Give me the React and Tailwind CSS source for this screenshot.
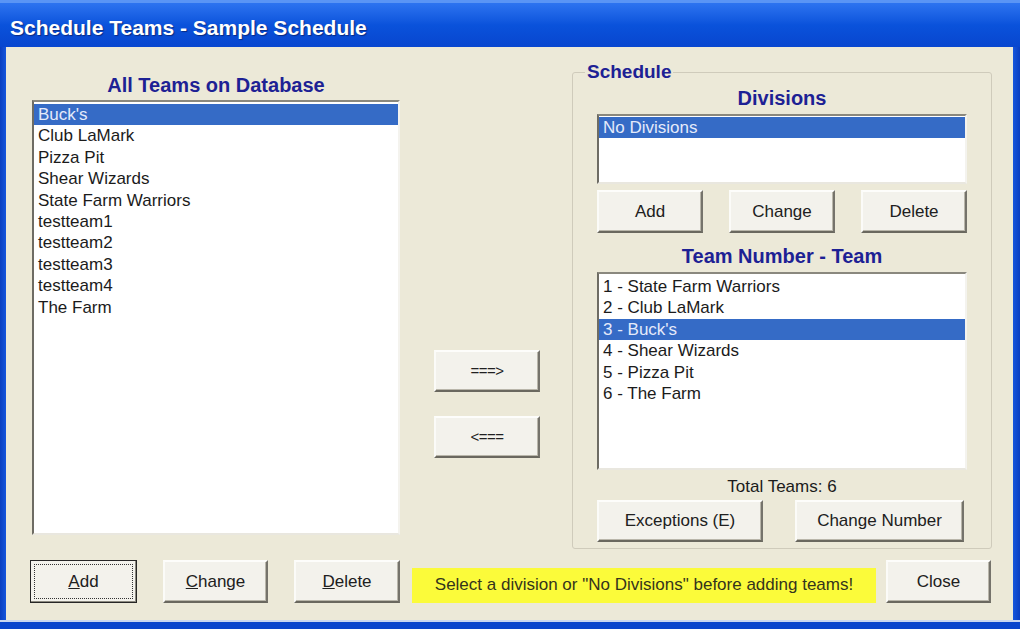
import React from "react";

const ALL_TEAMS = [
  "Buck's",
  "Club LaMark",
  "Pizza Pit",
  "Shear Wizards",
  "State Farm Warriors",
  "testteam1",
  "testteam2",
  "testteam3",
  "testteam4",
  "The Farm",
];

const SCHEDULED = [
  "1 - State Farm Warriors",
  "2 - Club LaMark",
  "3 - Buck's",
  "4 - Shear Wizards",
  "5 - Pizza Pit",
  "6 - The Farm",
];

function ListBox({ items, selected, className }) {
  return (
    <div
      className={
        "bg-white border-2 border-t-[#8a887e] border-l-[#6e6c64] border-r-[#f4f3ee] border-b-[#e9e7df] overflow-hidden " +
        className
      }
    >
      {items.map((it, i) => (
        <div
          key={it}
          className={
            i === selected
              ? "h-[21.4px] leading-[21.4px] pl-[4px] bg-[#356bc6] text-[#e4eafa] whitespace-nowrap"
              : "h-[21.4px] leading-[21.4px] pl-[4px] text-[#1b1b1b] whitespace-nowrap"
          }
        >
          {it}
        </div>
      ))}
    </div>
  );
}

function Btn({ className, children, focused }) {
  if (focused) {
    return (
      <div
        className={
          "border border-[#262626] bg-[#f3f2ec] p-[3px] shadow-[inset_-1px_-1px_0_#8c8a80] " +
          className
        }
      >
        <div className="h-full border border-dotted border-[#333] flex items-center justify-center text-[#202020]">
          {children}
        </div>
      </div>
    );
  }
  return (
    <div
      className={
        "flex items-center justify-center bg-[#f3f2ec] text-[#202020] border-2 border-t-[#fdfdfb] border-l-[#fbfbf8] border-r-[#75736b] border-b-[#6a685f] shadow-[inset_-1px_-1px_0_#b9b6aa] " +
        className
      }
    >
      {children}
    </div>
  );
}

function Heading({ children, className }) {
  return (
    <div
      className={
        "h-[20px] leading-[20px] text-center font-bold text-[20px] text-[#1d2194] " +
        className
      }
    >
      {children}
    </div>
  );
}

export default function App() {
  return (
    <div
      className="w-[1020px] h-[629px] flex flex-col bg-[#0b47d0] text-[17px] overflow-hidden"
      style={{ fontFamily: '"Liberation Sans", Arial, sans-serif' }}
    >
      {/* title bar */}
      <div className="h-[47px] flex items-center pl-[10px] pt-[6px] bg-gradient-to-b from-[#2d74f0] via-[#0a52db] to-[#0846cf] border-t-[3px] border-[#5a95f5]">
        <span className="text-white font-bold text-[21px] [text-shadow:1px_1px_1px_#0a2a80]">
          Schedule Teams - Sample Schedule
        </span>
      </div>

      <div className="flex flex-1 min-h-0">
        <div className="w-[6px] bg-gradient-to-r from-[#0a3ebf] to-[#1656dd]" />

        {/* dialog body */}
        <div className="flex-1 bg-[#ece9d8] flex flex-col pt-[13px]">
          <div className="flex items-start">
            {/* left: all teams */}
            <div className="ml-[26px] w-[368px] flex flex-col">
              <Heading className="mt-[15px]">All Teams on Database</Heading>
              <ListBox
                items={ALL_TEAMS}
                selected={0}
                className="mt-[5px] h-[435px] pt-[2px]"
              />
            </div>

            {/* middle arrows */}
            <div className="ml-[34px] w-[106px] flex flex-col gap-[24px] mt-[290px]">
              <Btn className="h-[42px] w-[106px] text-[15px] tracking-[-0.5px]">===&gt;</Btn>
              <Btn className="h-[42px] w-[106px] text-[15px] tracking-[-0.5px]">&lt;===</Btn>
            </div>

            {/* schedule groupbox */}
            <fieldset className="ml-[32px] mt-[1px] w-[420px] border border-[#cfcbbb] rounded-[3px] px-0 pb-[6px]">
              <legend className="ml-[12px] px-[2px] h-[22px] leading-[22px] font-bold text-[19px] text-[#1d2194]">
                Schedule
              </legend>
              <div className="px-[24px]">
                <Heading className="mt-[5px]">Divisions</Heading>
                <ListBox
                  items={["No Divisions"]}
                  selected={0}
                  className="mt-[6px] h-[70px] pt-px"
                />
                <div className="mt-[6px] flex justify-between">
                  <Btn className="w-[106px] h-[43px]">Add</Btn>
                  <Btn className="w-[106px] h-[43px]">Change</Btn>
                  <Btn className="w-[106px] h-[43px]">Delete</Btn>
                </div>
                <Heading className="mt-[13px]">Team Number - Team</Heading>
                <ListBox
                  items={SCHEDULED}
                  selected={2}
                  className="mt-[6px] h-[198px] pt-[2px]"
                />
                <div className="mt-[7px] h-[20px] leading-[20px] text-center text-[#1b1b1b]">
                  Total Teams: 6
                </div>
                <div className="mt-[3px] flex justify-between pr-[3px]">
                  <Btn className="w-[166px] h-[42px]">Exceptions (E)</Btn>
                  <Btn className="w-[169px] h-[42px]">Change Number</Btn>
                </div>
              </div>
            </fieldset>
          </div>

          {/* bottom row */}
          <div className="mt-[11px] ml-[24px] flex items-center">
            <Btn focused className="w-[107px] h-[43px]">
              <span>
                <span className="underline">A</span>dd
              </span>
            </Btn>
            <Btn className="ml-[26px] w-[105px] h-[43px]">
              <span>
                <span className="underline">C</span>hange
              </span>
            </Btn>
            <Btn className="ml-[26px] w-[106px] h-[43px]">
              <span>
                <span className="underline">D</span>elete
              </span>
            </Btn>
            <div className="ml-[12px] mt-[7px] w-[464px] h-[35px] bg-[#fbfb3a] flex items-center justify-center text-[#34341c] whitespace-nowrap">
              Select a division or "No Divisions" before adding teams!
            </div>
            <Btn className="ml-[10px] w-[105px] h-[43px]">Close</Btn>
          </div>
        </div>

        <div className="w-[7px] bg-gradient-to-r from-[#1656dd] to-[#0a3ebf]" />
      </div>

      {/* bottom frame */}
      <div className="h-[9px] bg-[#0a45cc] border-t-2 border-[#c9d6ef]" />
    </div>
  );
}
